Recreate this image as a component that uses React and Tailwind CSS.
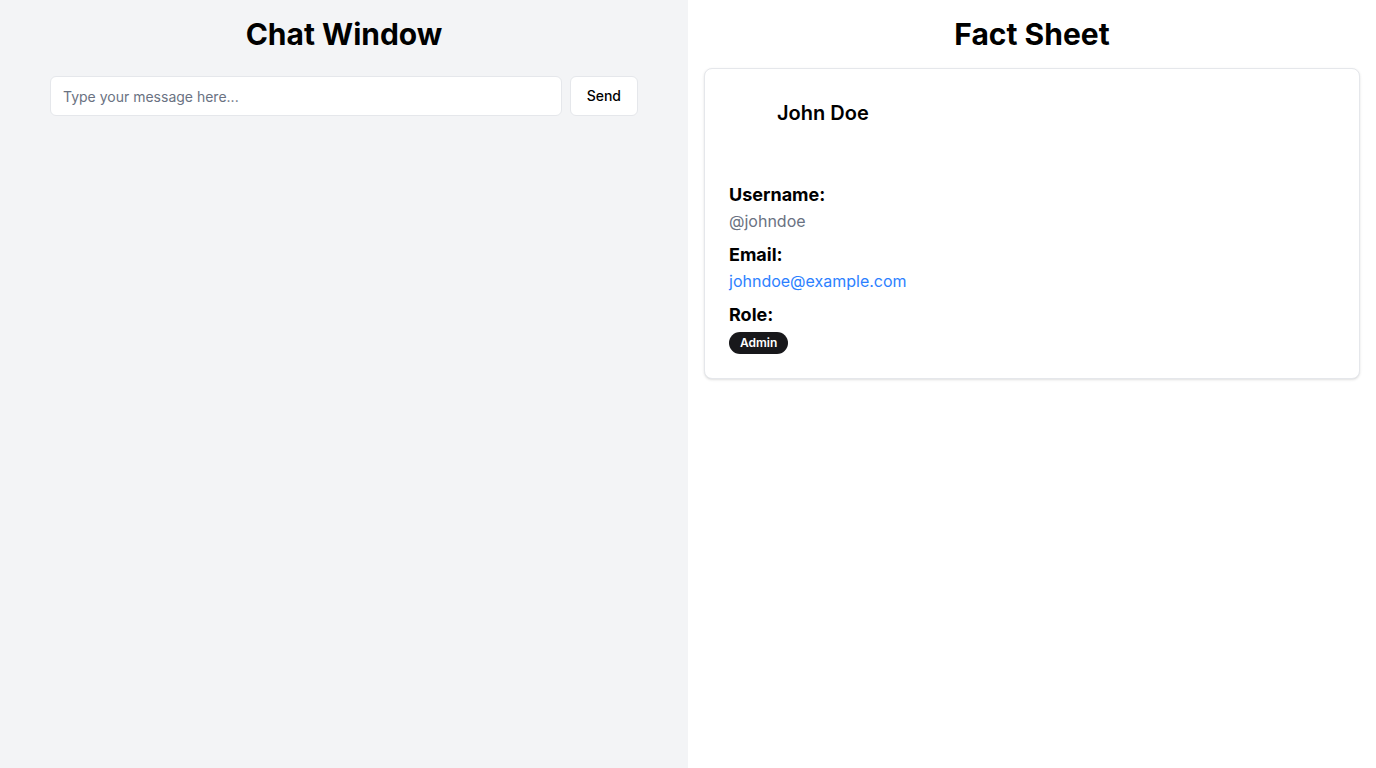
import React, { useState } from 'react';

const FactRow = ({ label, children }) => (
  <div>
    <h3 className="text-lg font-bold leading-7 text-black">{label}</h3>
    {children}
  </div>
);

const App = () => {
  const [message, setMessage] = useState('');

  return (
    <div
      className="flex h-screen w-full"
      style={{ fontFamily: 'Inter, "Noto Sans", sans-serif' }}
    >
      {/* Chat side */}
      <section className="w-1/2 bg-gray-100 p-4">
        <h2 className="mb-6 text-center text-3xl font-bold leading-9 text-black">Chat Window</h2>
        <div className="mx-auto flex w-[588px] gap-2">
          <input
            value={message}
            onChange={(e) => setMessage(e.target.value)}
            placeholder="Type your message here..."
            className="h-10 flex-1 rounded-md border border-gray-200 bg-white px-3 text-sm text-black outline-none placeholder:text-gray-500"
          />
          <button className="h-10 rounded-md border border-gray-200 bg-white px-4 text-sm font-medium text-black">
            Send
          </button>
        </div>
      </section>

      {/* Fact sheet side */}
      <section className="w-1/2 bg-white p-4">
        <h2 className="mb-4 text-center text-3xl font-bold leading-9 text-black">Fact Sheet</h2>
        <div className="rounded-lg border border-gray-200 bg-white p-6 shadow-sm">
          <div className="flex items-center gap-2">
            <div className="h-10 w-10" />
            <h3 className="text-xl font-semibold leading-7 text-black">John Doe</h3>
          </div>
          <div className="mt-12 space-y-2">
            <FactRow label="Username:">
              <p className="text-base leading-6 text-gray-500">@johndoe</p>
            </FactRow>
            <FactRow label="Email:">
              <p className="text-base leading-6 text-blue-500">johndoe@example.com</p>
            </FactRow>
            <FactRow label="Role:">
              <span className="inline-flex h-[22px] items-center rounded-full bg-[#18181b] px-[11px] text-xs font-semibold text-white">
                Admin
              </span>
            </FactRow>
          </div>
        </div>
      </section>
    </div>
  );
};

export default App;
